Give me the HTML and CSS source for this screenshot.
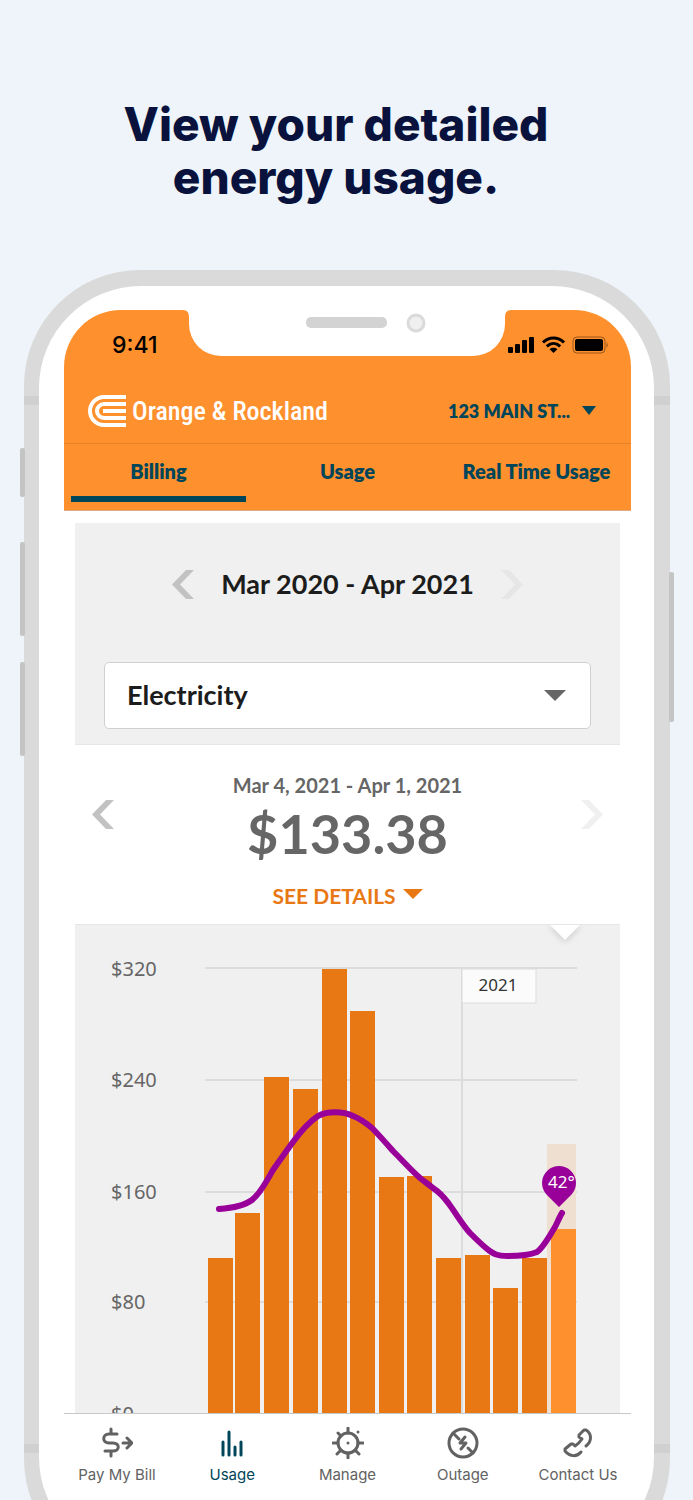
FILE: index.html
```html
<!DOCTYPE html>
<html lang="en">

<head>
    <meta charset="UTF-8">
    <meta name="viewport" content="width=device-width, initial-scale=1">
    <title>View your detailed energy usage</title>
    <link rel="stylesheet" href="styles.css">
</head>

<body>
    <div class="promo">
        <h1>View your detailed<br>energy usage.</h1>

        <div class="phone">
            <!-- side buttons and antenna bands -->
            <span class="side-button mute"></span>
            <span class="side-button volume-up"></span>
            <span class="side-button volume-down"></span>
            <span class="side-button power"></span>
            <span class="band band-top"></span>
            <span class="band band-bottom"></span>

            <div class="bezel">
                <svg class="notch" width="328" height="46" viewBox="0 0 328 46" aria-hidden="true">
                    <path fill="#fff" d="M0 0 Q6 0 6 7 V14 A32 32 0 0 0 38 46 H290 A32 32 0 0 0 322 14 V7 Q322 0 328 0 Z" />
                    <rect x="123" y="7" width="81" height="11" rx="5" fill="#d3d3d3" />
                    <circle cx="233" cy="13" r="8" fill="#efefef" stroke="#dadada" stroke-width="3" />
                </svg>

                <div class="screen">
                    <header class="header">
                        <div class="status-bar">
                            <span class="clock">9:41</span>
                            <svg width="101" height="18" viewBox="0 0 101 18" aria-hidden="true">
                                <rect x="0" y="11" width="5" height="6" rx="1" />
                                <rect x="7" y="8" width="5" height="9" rx="1" />
                                <rect x="14" y="4" width="5" height="13" rx="1" />
                                <rect x="21" y="1" width="5" height="16" rx="1" />
                                <path fill="none" stroke="#000" stroke-width="3" d="M35 6.5 C41 0.4 50 0.4 56 6.5 M38.8 10.4 C43 6.4 48 6.4 52.2 10.4" />
                                <path d="M45.500 17 L41.600 13.200 C43.800 11.300 47.200 11.300 49.400 13.200 Z" />
                                <rect x="65" y="1" width="32" height="16" rx="4" fill="none" stroke="#000" stroke-opacity=".4" />
                                <rect x="67" y="3" width="28" height="12" rx="2" />
                                <path fill-opacity=".4" d="M98.500 6 Q101 9 98.500 12 Z" />
                            </svg>
                        </div>
                        <div class="brand-row">
                            <a class="brand" href="#">
                                <svg width="38" height="32" viewBox="0 0 38 32" aria-hidden="true">
                                    <g fill="none" stroke="#fff" stroke-width="4">
                                        <path d="M38 2 H16 A14 14 0 0 0 16 30 H38" />
                                        <path d="M38 9 H16 A7 7 0 0 0 16 23 H38" />
                                        <path d="M38 16 H15" />
                                    </g>
                                </svg>
                                <span>Orange &amp; Rockland</span>
                            </a>
                            <button type="button" class="address">
                                123 MAIN ST...
                                <svg width="14" height="9" viewBox="0 0 14 9" aria-hidden="true"><path d="M0 0 H14 L7 9 Z" /></svg>
                            </button>
                        </div>
                        <nav class="tabs">
                            <a class="active" href="#">Billing</a>
                            <a href="#">Usage</a>
                            <a href="#">Real Time Usage</a>
                        </nav>
                    </header>

                    <main class="content">
                        <section class="filters">
                            <div class="period">
                                <button type="button" class="arrow" aria-label="Previous year">
                                    <svg width="22" height="29" viewBox="0 0 22 29"><path d="M14 0 H22 L8 14.500 L22 29 H14 L0 14.500 Z" /></svg>
                                </button>
                                <h2>Mar 2020 - Apr 2021</h2>
                                <button type="button" class="arrow" aria-label="Next year" disabled>
                                    <svg width="22" height="29" viewBox="0 0 22 29"><path d="M8 0 H0 L14 14.500 L0 29 H8 L22 14.500 Z" /></svg>
                                </button>
                            </div>
                            <div class="select-box">
                                <select aria-label="Service">
                                    <option>Electricity</option>
                                </select>
                                <svg width="22" height="11" viewBox="0 0 22 11" aria-hidden="true"><path d="M0 0 H22 L11 11 Z" /></svg>
                            </div>
                        </section>

                        <section class="summary">
                            <button type="button" class="arrow" aria-label="Previous bill">
                                <svg width="22" height="29" viewBox="0 0 22 29"><path d="M14 0 H22 L8 14.500 L22 29 H14 L0 14.500 Z" /></svg>
                            </button>
                            <div class="bill">
                                <p class="bill-dates">Mar 4, 2021 - Apr 1, 2021</p>
                                <p class="bill-total">$133.38</p>
                                <button type="button" class="details">
                                    SEE DETAILS
                                    <svg width="20" height="10" viewBox="0 0 20 10" aria-hidden="true"><path d="M0 0 H20 L10 10 Z" /></svg>
                                </button>
                            </div>
                            <button type="button" class="arrow" aria-label="Next bill" disabled>
                                <svg width="22" height="29" viewBox="0 0 22 29"><path d="M8 0 H0 L14 14.500 L0 29 H8 L22 14.500 Z" /></svg>
                            </button>
                        </section>

                        <section class="chart">
                            <svg viewBox="0 0 545 488" role="img" aria-label="Monthly electricity cost and temperature">
                                <path class="pointer" d="M474 -1 H506 L490 15 Z" />

                                <g class="grid">
                                    <path d="M130 43 H502 M130 155 H502 M130 267 H502 M130 377 H502" />
                                    <path d="M387 43 V488" />
                                </g>
                                <g class="axis">
                                    <text x="36" y="51">$320</text>
                                    <text x="36" y="162">$240</text>
                                    <text x="36" y="274">$160</text>
                                    <text x="36" y="384">$80</text>
                                    <text x="36" y="496">$0</text>
                                </g>

                                <rect class="year-box" x="387" y="44" width="74" height="34" />
                                <text class="year" x="423" y="66">2021</text>

                                <rect class="projected" x="472" y="219" width="29" height="269" />
                                <g class="bars">
                                    <rect x="133" y="333" width="25" height="155" />
                                    <rect x="160" y="288" width="25" height="200" />
                                    <rect x="189" y="152" width="25" height="336" />
                                    <rect x="218" y="164" width="25" height="324" />
                                    <rect x="247" y="44" width="25" height="444" />
                                    <rect x="275" y="86" width="25" height="402" />
                                    <rect x="304" y="252" width="25" height="236" />
                                    <rect x="332" y="251" width="25" height="237" />
                                    <rect x="361" y="333" width="25" height="155" />
                                    <rect x="390" y="330" width="25" height="158" />
                                    <rect x="418" y="363" width="25" height="125" />
                                    <rect x="447" y="333" width="25" height="155" />
                                    <rect class="current" x="476" y="304" width="25" height="184" />
                                </g>

                                <path class="temperature" d="M144 284 C158 283 169 281 177 275 C186 268 192 255 198 245 C205 235 212 225 218 217 C226 206 234 197 243 191 C252 186 268 186 278 191 C286 194 291 198 297 203 C304 210 311 218 318 226 C327 235 336 245 345 253 C350 257 353 259 358 263 C367 269 371 275 374 279 C382 290 387 299 395 308 C401 314 406 319 411 323 C418 329 422 331 433 331 C447 331 455 330 462 327 C468 323 474 312 480 302 C483 296 485 291 487 288" />
                                <path class="pin" d="M484 282 L471 269 A17 17 0 1 1 497 269 Z" />
                                <text class="pin-label" x="473" y="263">42°</text>
                            </svg>
                        </section>
                    </main>

                    <nav class="tab-bar">
                        <a href="#">
                            <svg width="32" height="32" viewBox="0 0 32 32" aria-hidden="true">
                                <path d="M16 7 H8 C1 7 1 16 8 16 H12 C19 16 19 24 12 24 H4 M10 2 V7 M10 24 V29 M22 16 H31 M26 11 L31 16 L26 21" />
                            </svg>
                            Pay My Bill
                        </a>
                        <a class="active" href="#">
                            <svg width="32" height="32" viewBox="0 0 32 32" aria-hidden="true">
                                <path d="M7 15 V28 M13 5 V28 M19 20 V28 M25 15 V28" />
                            </svg>
                            Usage
                        </a>
                        <a href="#">
                            <svg width="32" height="32" viewBox="0 0 32 32" aria-hidden="true">
                                <circle cx="16" cy="16" r="10" />
                                <path d="M16 1 V6 M16 26 V31 M1 16 H6 M26 16 H31 M6 6 L9 9 M23 23 L27 27 M5 27 L9 23 M26 5 V5 M16 16 V16" />
                            </svg>
                            Manage
                        </a>
                        <a href="#">
                            <svg width="32" height="32" viewBox="0 0 32 32" aria-hidden="true">
                                <circle cx="16" cy="16" r="14" />
                                <path d="M6 6 L12 12 M21 21 L26 26 M18 10 L13 16 L19 16 L14 22" />
                            </svg>
                            Outage
                        </a>
                        <a href="#">
                            <svg width="32" height="32" viewBox="0 0 32 32" aria-hidden="true">
                                <path d="M24 19 C30 14 30 7 24 3 L22 3 L17 8 L17 10 L20 12 C18 15 16 17 13 19 L11 17 L9 17 L3 22 L3 24 C8 30 15 30 19 25" />
                            </svg>
                            Contact Us
                        </a>
                    </nav>
                </div>
            </div>
        </div>
    </div>
</body>

</html>
```

FILE: styles.css
```css
* {
    box-sizing: border-box;
}

body {
    margin: 0;
    background-color: #eef4f9;
    font-family: Lato, "Liberation Sans", sans-serif;
}

h1,
h2,
p {
    margin: 0;
}

a {
    color: inherit;
    text-decoration: none;
}

button {
    padding: 0;
    border: none;
    background: none;
    color: inherit;
    font: inherit;
    cursor: pointer;
}

svg {
    display: block;
}

/* the phone runs off the bottom of the page */
.promo {
    height: 100vh;
    padding: 98px 23px 0 24px;
    overflow: hidden;
}

.promo h1 {
    padding-right: 22px;
    margin-bottom: 66px;
    color: #08123c;
    font-family: Inter, sans-serif;
    font-size: 46px;
    font-weight: 800;
    line-height: 53px;
    text-align: center;
}

/* phone */
.phone {
    position: relative;
    padding: 16px 16px 16px 15px;
    border-radius: 116px;
    background-color: #dadada;
}

.bezel {
    position: relative;
    padding: 24px 23px 74px 25px;
    border-radius: 102px;
    background-color: #fff;
}

.screen {
    border-radius: 57px 57px 0 0;
    overflow: hidden;
}

.notch {
    position: absolute;
    top: 24px;
    left: 50%;
    transform: translateX(-50%);
}

.side-button {
    position: absolute;
    left: -4px;
    width: 5px;
    border-radius: 2px;
    background-color: #c4c4c4;
}

.mute {
    top: 178px;
    height: 49px;
}

.volume-up {
    top: 272px;
    height: 94px;
}

.volume-down {
    top: 392px;
    height: 94px;
}

.power {
    top: 302px;
    right: -4px;
    left: auto;
    height: 150px;
}

.band {
    position: absolute;
    left: 0;
    width: 100%;
    height: 9px;
    background-color: #d0d0d0;
}

.band-top {
    top: 126px;
}

.band-bottom {
    top: 1174px;
}

/* orange header */
.header {
    background-color: #ff902e;
    color: #00465a;
    box-shadow: inset 0 -1px #d9a98a;
}

.status-bar {
    display: flex;
    justify-content: space-between;
    align-items: center;
    height: 68px;
    padding: 2px 22px 0 48px;
    color: #000;
    font-family: Inter, sans-serif;
    font-size: 23px;
    font-weight: 500;
}

.brand-row {
    display: flex;
    justify-content: space-between;
    align-items: center;
    height: 66px;
    padding: 0 35px 0 24px;
    border-bottom: 1px solid #e5812a;
}

.brand {
    display: flex;
    align-items: center;
    gap: 6px;
    color: #fff;
    font-family: "Roboto Condensed", Roboto, sans-serif;
    font-size: 26px;
    font-weight: 500;
}

.address {
    display: flex;
    align-items: center;
    gap: 12px;
    font-size: 18px;
    font-weight: 800;
}

.address svg {
    fill: #00465a;
}

.tabs {
    display: flex;
    height: 67px;
    padding-bottom: 9px;
}

.tabs a {
    flex: 1;
    margin: 0 7px;
    padding-top: 15px;
    border-bottom: 6px solid transparent;
    font-size: 20px;
    font-weight: 800;
    line-height: 24px;
    text-align: center;
    white-space: nowrap;
}

.tabs .active {
    border-color: #00465a;
}

/* content */
.content {
    padding: 12px 11px 0;
}

.arrow {
    fill: #c2c2c2;
}

.arrow:disabled {
    fill: #e6e6e6;
    cursor: default;
}

.filters {
    padding: 46px 29px 15px;
    border-bottom: 1px solid #e6e6e6;
    background-color: #f0f0f0;
}

.period {
    display: flex;
    justify-content: center;
    align-items: center;
    gap: 27px;
    margin-bottom: 63px;
}

.period h2 {
    color: #1c1c1c;
    font-size: 27px;
    font-weight: 700;
    line-height: 30px;
}

.select-box {
    position: relative;
}

.select-box select {
    display: block;
    width: 100%;
    height: 67px;
    padding: 0 60px 2px 22px;
    border: 1px solid #d0d0d0;
    border-radius: 5px;
    background-color: #fff;
    color: #1c1c1c;
    font-family: inherit;
    font-size: 27px;
    font-weight: 700;
    appearance: none;
}

.select-box svg {
    position: absolute;
    top: 28px;
    right: 25px;
    fill: #666;
    pointer-events: none;
}

.summary {
    display: flex;
    justify-content: space-between;
    padding: 28px 17px 15px;
    color: #666;
    text-align: center;
}

.summary .arrow {
    align-self: flex-start;
    margin-top: 27px;
}

.summary .arrow:disabled {
    fill: #f0f0f0;
}

.bill-dates {
    font-size: 20px;
    font-weight: 700;
    line-height: 24px;
}

.bill-total {
    font-size: 54px;
    font-weight: 700;
    line-height: 74px;
}

.details {
    display: flex;
    align-items: center;
    gap: 7px;
    margin: 12px auto 0;
    color: #e87813;
    font-size: 21px;
    font-weight: 700;
    line-height: 26px;
}

.details svg {
    fill: #e87813;
    margin-bottom: 5px;
}

/* chart */
.chart {
    border-top: 1px solid #e6e6e6;
    background-color: #f0f0f0;
    font-family: "Noto Sans", sans-serif;
}

.chart svg {
    width: 100%;
}

.pointer {
    fill: #fff;
    filter: drop-shadow(0 2px 3px rgba(0, 0, 0, 0.15));
}

.grid {
    fill: none;
    stroke: #dcdcdc;
    stroke-width: 2;
}

.axis {
    fill: #666;
    font-size: 20px;
}

.year-box {
    fill: #fbfbfb;
    stroke: #dcdcdc;
}

.year {
    fill: #333;
    font-size: 17px;
    text-anchor: middle;
}

.projected {
    fill: #efdfd0;
}

.bars {
    fill: #e87813;
}

.bars .current {
    fill: #ff902e;
}

.temperature {
    fill: none;
    stroke: #990099;
    stroke-width: 6;
    stroke-linecap: round;
}

.pin {
    fill: #990099;
}

.pin-label {
    fill: #fff;
    font-size: 17px;
}

/* bottom tab bar */
.tab-bar {
    display: flex;
    justify-content: space-between;
    padding-top: 13px;
    border-top: 1px solid #c8c8c8;
    color: #626262;
    font-family: Inter, sans-serif;
    font-size: 15px;
    line-height: 20px;
}

.tab-bar a {
    display: flex;
    flex: 0 0 106px;
    flex-direction: column;
    align-items: center;
    gap: 6px;
}

.tab-bar svg {
    fill: none;
    stroke: #626262;
    stroke-width: 3;
    stroke-linecap: round;
    stroke-linejoin: round;
}

.tab-bar .active {
    color: #00465a;
}

.tab-bar .active svg {
    stroke: #00465a;
}
```
